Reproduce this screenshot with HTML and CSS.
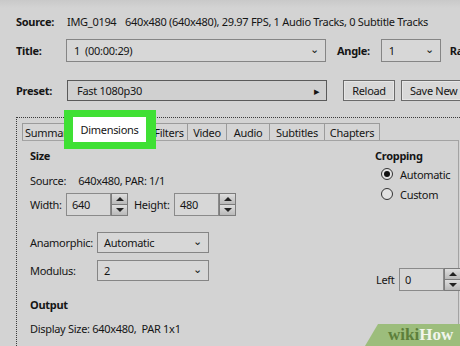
FILE: index.html
```html
<!DOCTYPE html>
<html lang="en">

<head>
    <meta charset="UTF-8">
    <title>HandBrake - Dimensions</title>
    <link rel="stylesheet" href="styles.css">
</head>

<body>
    <div class="top">
        <div class="row source-row">
            <span class="label">Source:</span>
            <span class="src-name">IMG_0194</span>
            <span class="src-info">640x480 (640x480), 29.97 FPS, 1 Audio Tracks, 0 Subtitle Tracks</span>
        </div>

        <div class="row title-row">
            <span class="label">Title:</span>
            <div class="select title-select"><span>1&nbsp;&nbsp;(00:00:29)</span><span class="chev">&#8964;</span></div>
            <span class="label angle-label">Angle:</span>
            <div class="select angle-select"><span>1</span><span class="chev">&#8964;</span></div>
            <span class="label range-label">Range:</span>
        </div>

        <div class="row preset-row">
            <span class="label">Preset:</span>
            <div class="preset-box"><span>Fast 1080p30</span><span class="arrow">&#9656;</span></div>
            <button class="btn reload">Reload</button>
            <button class="btn save">Save New Preset</button>
        </div>
    </div>

    <div class="tab-frame">
        <div class="tabs">
            <div class="tab t-summary">Summary</div>
            <div class="tab active">Dimensions</div>
            <div class="tab t-filters">Filters</div>
            <div class="tab t-video">Video</div>
            <div class="tab t-audio">Audio</div>
            <div class="tab t-subs">Subtitles</div>
            <div class="tab t-chapters">Chapters</div>
        </div>

        <div class="panel">
            <div class="col-left">
                <div class="heading">Size</div>
                <div class="line">Source:<span class="src-val">640x480, PAR: 1/1</span></div>

                <div class="row size-row">
                    <span class="w-label">Width:</span>
                    <div class="spin">
                        <div class="spin-input">640</div>
                        <div class="spin-btns"><span class="up"></span><span class="down"></span></div>
                    </div>
                    <span class="h-label">Height:</span>
                    <div class="spin">
                        <div class="spin-input">480</div>
                        <div class="spin-btns"><span class="up"></span><span class="down"></span></div>
                    </div>
                </div>

                <div class="row combo-row anamorphic">
                    <span class="c-label">Anamorphic:</span>
                    <div class="select small-select"><span>Automatic</span><span class="chev">&#8964;</span></div>
                </div>
                <div class="row combo-row modulus">
                    <span class="c-label">Modulus:</span>
                    <div class="select small-select"><span>2</span><span class="chev">&#8964;</span></div>
                </div>

                <div class="heading output">Output</div>
                <div class="line display">Display Size: 640x480,&nbsp; PAR 1x1</div>
            </div>

            <div class="col-right">
                <div class="heading">Cropping</div>
                <div class="radio-row first"><span class="radio checked"></span>Automatic</div>
                <div class="radio-row"><span class="radio"></span>Custom</div>

                <div class="row left-row">
                    <span class="l-label">Left</span>
                    <div class="spin">
                        <div class="spin-input narrow">0</div>
                        <div class="spin-btns"><span class="up"></span><span class="down"></span></div>
                    </div>
                </div>
            </div>
        </div>
    </div>

    <div class="wikihow"><span class="wiki">wiki</span><span class="how">How</span></div>
</body>

</html>
```

FILE: styles.css
```css
* {
    margin: 0;
    padding: 0;
    box-sizing: border-box;
}

html,
body {
    width: 460px;
    height: 346px;
    overflow: hidden;
}

body {
    position: relative;
    background-color: #d3d3d3;
    font-family: "Noto Sans", sans-serif;
    font-size: 11px;
    letter-spacing: -0.3px;
    color: #151515;
}

.row {
    display: flex;
    align-items: center;
    white-space: nowrap;
}

.row > * {
    flex-shrink: 0;
}

/* header rows */

.top {
    padding: 12px 0 0 16px;
    background: linear-gradient(#c9c9c9, #d3d3d3 8px);
}

.label {
    width: 50px;
    font-weight: bold;
}

.source-row {
    height: 18px;
}

.src-name {
    margin-left: 1px;
    width: 58px;
}

.title-row {
    height: 23px;
    margin-top: 9px;
}

.select {
    display: flex;
    align-items: center;
    justify-content: space-between;
    height: 100%;
    padding: 0 6px 0 7px;
    background-color: #d7d7d7;
    border: 1px solid #858585;
}

.chev {
    font-size: 11px;
    line-height: 1;
    margin-top: -5px;
}

.title-select {
    width: 260px;
}

.angle-label {
    width: auto;
    margin-left: 11px;
}

.angle-select {
    width: 60px;
    margin-left: 11px;
}

.range-label {
    width: auto;
    margin-left: 9px;
}

.preset-row {
    height: 21px;
    margin-top: 18px;
}

.preset-box {
    display: flex;
    align-items: center;
    justify-content: space-between;
    width: 260px;
    height: 100%;
    margin-left: 1px;
    padding: 0 6px 0 9px;
    background-color: #d0d0d0;
    border: 1px solid #5a5a5a;
}

.arrow {
    font-size: 11px;
}

.btn {
    height: 100%;
    font-family: inherit;
    font-size: 11px;
    letter-spacing: -0.3px;
    color: #151515;
    background-color: #d8d8d8;
    border: 1px solid #6a6a6a;
    box-shadow: inset 0 0 0 1px #e6e6e6;
}

.reload {
    width: 52px;
    margin-left: 16px;
}

.save {
    width: 90px;
    margin-left: 6px;
    padding-left: 8px;
    text-align: left;
}

/* tab control */

.tab-frame {
    margin: 16px 0 0 16px;
    padding: 5px 0 0 5px;
    height: 229px;
    border-top: 1px dotted #3a3a3a;
    border-left: 1px dotted #3a3a3a;
}

.tabs {
    display: flex;
    height: 17px;
    white-space: nowrap;
}

.tab {
    display: flex;
    flex-shrink: 0;
    align-items: center;
    justify-content: center;
    height: 17px;
    background-color: #d5d5d5;
    border: 1px solid #9b9b9b;
    border-bottom: none;
    border-left: none;
}

.t-summary {
    width: 51px;
    justify-content: flex-start;
    padding-left: 2px;
    border-left: 1px solid #9b9b9b;
    overflow: hidden;
}

.t-filters {
    width: 42px;
    padding-left: 5px;
}

.t-video {
    width: 39px;
}

.t-audio {
    width: 43px;
}

.t-subs {
    width: 55px;
}

.t-chapters {
    width: 55px;
}

.tab.active {
    position: relative;
    z-index: 1;
    width: 73px;
    height: 25px;
    margin-top: -6px;
    background-color: #fff;
    border: none;
}

.tab.active::before {
    content: "";
    position: absolute;
    top: -7px;
    right: -10px;
    bottom: -7px;
    left: -9px;
    border: solid #3fe034;
    border-width: 7px 10px 7px 9px;
}

.panel {
    display: flex;
    width: 437px;
    height: 206px;
    padding: 7px 0 0 8px;
    border-top: 1px solid #a3a3a3;
    border-right: 1px solid #a3a3a3;
}

.col-left {
    width: 345px;
    flex-shrink: 0;
}

.col-right {
    flex: 1;
}

.heading {
    height: 16px;
    line-height: 16px;
    font-weight: bold;
}

.line {
    height: 16px;
    line-height: 16px;
    margin-top: 9px;
}

.src-val {
    margin-left: 12px;
}

.size-row {
    height: 23px;
    margin-top: 4px;
}

.w-label {
    width: 36px;
}

.h-label {
    width: 40px;
    margin-left: 6px;
}

.spin {
    display: flex;
    height: 100%;
}

.spin-input {
    width: 45px;
    height: 100%;
    padding: 3px 0 0 5px;
    background-color: #d7d7d7;
    border: 1px solid #8a8a8a;
}

.spin-btns {
    display: flex;
    flex-direction: column;
    width: 17px;
    height: 100%;
}

.spin-btns span {
    position: relative;
    flex: 1;
    background: linear-gradient(#dedede, #b9b9b9);
    border: 1px solid #7c7c7c;
}

.spin-btns .down {
    border-top: none;
}

.spin-btns span::after {
    content: "";
    position: absolute;
    left: 4px;
    border-left: 4px solid transparent;
    border-right: 4px solid transparent;
}

.spin-btns .up::after {
    top: 3px;
    border-bottom: 4px solid #222;
}

.spin-btns .down::after {
    top: 3px;
    border-top: 4px solid #222;
}

.combo-row {
    height: 21px;
}

.anamorphic {
    margin-top: 16px;
}

.modulus {
    margin-top: 7px;
}

.c-label {
    width: 67px;
}

.small-select {
    width: 112px;
    padding-left: 6px;
}

.output {
    margin-top: 16px;
}

.display {
    margin-top: 8px;
}

.radio-row {
    display: flex;
    align-items: center;
    height: 16px;
    margin-top: 4px;
}

.radio-row.first {
    margin-top: 2px;
}

.radio {
    position: relative;
    width: 12px;
    height: 12px;
    margin: 0 7px 0 6px;
    border: 1px solid #333;
    border-radius: 50%;
    background-color: #e2e2e2;
}

.radio.checked::after {
    content: "";
    position: absolute;
    top: 2px;
    left: 2px;
    width: 6px;
    height: 6px;
    border-radius: 50%;
    background-color: #111;
}

.left-row {
    height: 23px;
    margin-top: 66px;
}

.l-label {
    width: 23px;
    margin-left: 1px;
}

/* watermark */

.wikihow {
    position: absolute;
    left: 365px;
    bottom: 0;
    width: 95px;
    height: 22px;
    padding-left: 23px;
    background-color: #9cbd7c;
    clip-path: polygon(13px 0, 100% 0, 100% 100%, 0 100%);
    font-family: "Liberation Serif", serif;
    font-size: 17px;
    font-weight: bold;
    letter-spacing: 0;
    line-height: 22px;
}

.wiki {
    color: #5c7f3b;
}

.how {
    color: #f1f5ec;
}
```
